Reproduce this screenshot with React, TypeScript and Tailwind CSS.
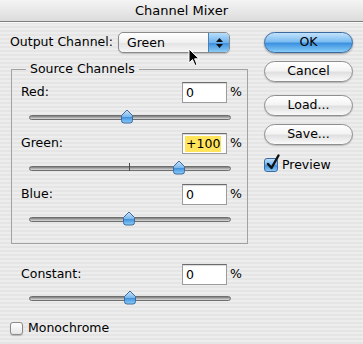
import React from 'react';

const font = "font-['DejaVu_Sans',sans-serif] text-[12.5px] text-black";

// Blue aqua drop thumb
const Thumb: React.FC<{ left: number }> = ({ left }) => (
  <svg
    className="absolute top-0"
    style={{ left: left - 7 }}
    width="14"
    height="15"
    viewBox="0 0 14 15"
  >
    <defs>
      <linearGradient id="thumbFill" x1="0" y1="0" x2="0" y2="1">
        <stop offset="0" stopColor="#cfe6fa" />
        <stop offset="0.5" stopColor="#7db8ec" />
        <stop offset="0.55" stopColor="#3f8fdc" />
        <stop offset="1" stopColor="#8fd0fb" />
      </linearGradient>
    </defs>
    <path
      d="M7 1 L12.5 6.5 L12.5 11.5 Q12.5 14 10 14 L4 14 Q1.5 14 1.5 11.5 L1.5 6.5 Z"
      fill="url(#thumbFill)"
      stroke="#3c6c9e"
      strokeWidth="1"
    />
  </svg>
);

const Slider: React.FC<{ pos: number; tick?: boolean; className?: string }> = ({ pos, tick, className = '' }) => (
  <div className={`relative h-[15px] w-[202px] ${className}`}>
    <div className="absolute left-0 right-0 top-[6px] h-[5px] rounded-full border border-[#6f6f6f] bg-[linear-gradient(to_bottom,#7a7a7a,#b8b8b8_60%,#d8d8d8)]" />
    {tick && <div className="absolute left-[100px] top-[3px] h-[8px] w-px bg-[#4a4a4a]" />}
    <Thumb left={pos} />
  </div>
);

const NumberField: React.FC<{ value: string; selected?: boolean }> = ({ value, selected }) => (
  <div className="flex h-[21px] w-[45px] items-center border border-[#9c9c9c] border-t-[#6a6a6a] bg-white pl-[2px] shadow-[inset_0_1px_1px_rgba(0,0,0,0.15)]">
    <span className={selected ? 'bg-[#ffe45c] px-[1px] leading-[16px]' : 'px-[1px] leading-[16px]'}>{value}</span>
  </div>
);

const ChannelRow: React.FC<{ label: string; value: string; pos: number; tick?: boolean; selected?: boolean }> = ({
  label,
  value,
  pos,
  tick,
  selected,
}) => (
  <div>
    <div className="flex h-[21px] items-center pl-[9px]">
      <span className="w-[161px]">{label}</span>
      <NumberField value={value} selected={selected} />
      <span className="ml-[3px]">%</span>
    </div>
    <Slider pos={pos} tick={tick} className="ml-[17px] mt-[6px]" />
  </div>
);

const PillButton: React.FC<{ label: string; primary?: boolean; className?: string }> = ({ label, primary, className = '' }) => (
  <button
    className={`flex h-[21px] w-[89px] items-center justify-center rounded-full border ${
      primary
        ? 'border-[#3a6aa0] bg-[linear-gradient(to_bottom,#c2e2fb_0%,#7dbdf1_45%,#3d92e0_55%,#86ccf8_100%)] shadow-[0_1px_2px_rgba(0,0,0,0.35)]'
        : 'border-[#8e8e8e] bg-[linear-gradient(to_bottom,#ffffff_0%,#f4f4f4_45%,#e0e0e0_55%,#fafafa_100%)] shadow-[0_1px_1px_rgba(0,0,0,0.2)]'
    } ${className}`}
  >
    {label}
  </button>
);

export default function App() {
  return (
    <div className={`${font} h-[344px] w-[363px] overflow-hidden bg-[repeating-linear-gradient(to_bottom,#ededed_0px,#ededed_2px,#e5e5e5_2px,#e5e5e5_4px)]`}>
      {/* title bar */}
      <div className="flex h-[22px] items-center justify-center border-b border-[#7f7f7f] bg-[linear-gradient(to_bottom,#f4f4f4,#dcdcdc)] text-[13px] shadow-[0_1px_0_#fafafa]">
        Channel Mixer
      </div>

      <div className="relative flex pl-[10px] pt-[10px]">
        {/* left column */}
        <div className="w-[238px]">
          <div className="flex h-[21px] items-center">
            <span className="w-[108px]">Output Channel:</span>
            <div className="flex h-[21px] w-[112px] overflow-hidden rounded-[5px] border border-[#8a8a8a] bg-[linear-gradient(to_bottom,#ffffff,#f0f0f0_50%,#e4e4e4_55%,#f6f6f6)] shadow-[0_1px_1px_rgba(0,0,0,0.2)]">
              <span className="flex-1 pl-[8px] leading-[19px]">Green</span>
              <div className="flex w-[21px] flex-col items-center justify-center gap-[2px] border-l border-[#4a7fb8] bg-[linear-gradient(to_bottom,#b9defa,#6fb4ee_50%,#3f92df_55%,#8ccbf6)]">
                <svg width="7" height="4" viewBox="0 0 7 4">
                  <path d="M3.5 0 L7 4 L0 4 Z" fill="#111" />
                </svg>
                <svg width="7" height="4" viewBox="0 0 7 4">
                  <path d="M0 0 L7 0 L3.5 4 Z" fill="#111" />
                </svg>
              </div>
            </div>
          </div>

          <fieldset className="ml-[1px] mt-[8px] w-[237px] border border-[#a2a2a2] pb-[17px]">
            <legend className="ml-[14px] px-[4px] leading-[16px]">Source Channels</legend>
            <div className="mt-[5px] flex flex-col gap-[9px]">
              <ChannelRow label="Red:" value="0" pos={98} />
              <ChannelRow label="Green:" value="+100" pos={150} tick selected />
              <ChannelRow label="Blue:" value="0" pos={100} />
            </div>
          </fieldset>

          <div className="mt-[20px]">
            <div className="flex h-[21px] items-center pl-[11px]">
              <span className="w-[161px]">Constant:</span>
              <NumberField value="0" />
              <span className="ml-[3px]">%</span>
            </div>
            <Slider pos={101} className="ml-[19px] mt-[5px]" />
          </div>

          <div className="mt-[16px] flex h-[14px] items-center gap-[5px]">
            <div className="h-[13px] w-[13px] rounded-[3px] border border-[#8a8a8a] bg-[linear-gradient(to_bottom,#ffffff,#e6e6e6)] shadow-[0_1px_1px_rgba(0,0,0,0.2)]" />
            <span>Monochrome</span>
          </div>
        </div>

        {/* right column */}
        <div className="ml-[16px] flex flex-col">
          <PillButton label="OK" primary />
          <PillButton label="Cancel" className="mt-[8px]" />
          <PillButton label="Load..." className="mt-[13px]" />
          <PillButton label="Save..." className="mt-[8px]" />
          <div className="mt-[13px] flex h-[14px] items-center gap-[4px]">
            <div className="relative h-[14px] w-[14px] rounded-[3px] border border-[#3a6aa0] bg-[linear-gradient(to_bottom,#bfe0fa,#6db2ee_50%,#3f92df_55%,#8bcaf6)]">
              <svg className="absolute left-[1px] top-[-5px]" width="14" height="17" viewBox="0 0 14 17">
                <path d="M2 10 L5.5 14 L12.5 1.5" fill="none" stroke="#111" strokeWidth="2.4" strokeLinecap="round" strokeLinejoin="round" />
              </svg>
            </div>
            <span>Preview</span>
          </div>
        </div>

        {/* mouse pointer over the popup */}
        <svg className="absolute left-[188px] top-[26px]" width="12" height="19" viewBox="0 0 12 19">
          <path d="M1 1 L1 15 L4.5 11.5 L7 17.5 L9 16.5 L6.6 10.8 L11 10.8 Z" fill="#000" stroke="#fff" strokeWidth="1" strokeLinejoin="round" />
        </svg>
      </div>
    </div>
  );
}
